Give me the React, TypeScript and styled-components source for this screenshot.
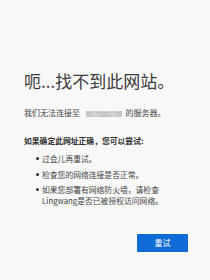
import styled, { createGlobalStyle } from "styled-components";

const GlobalStyle = createGlobalStyle`
  html, body {
    margin: 0;
    padding: 0;
    background: #f8f8f8;
  }
  body {
    font-family: "Noto Sans CJK SC", "Noto Sans", sans-serif;
  }
`;

const Page = styled.div`
  width: 210px;
  height: 280px;
  box-sizing: border-box;
  padding: 70px 22px 0 24px;
  background: #f8f8f8;
  color: #444;
`;

const Title = styled.h1`
  margin: 0;
  font-size: 17px;
  line-height: 22px;
  font-weight: 400;
  color: #3c3c3c;
`;

const Text = styled.p<{ $bold?: boolean; $gap: number }>`
  margin: ${(p) => p.$gap}px 0 0;
  font-size: ${(p) => (p.$bold ? "7.8px" : "8px")};
  line-height: 12px;
  font-weight: ${(p) => (p.$bold ? 700 : 400)};
  color: ${(p) => (p.$bold ? "#333" : "#444")};
  white-space: nowrap;
`;

const Hidden = styled.span`
  display: inline-block;
  width: 36px;
  height: 6px;
  margin: 0 3.5px 0 6px;
  vertical-align: -0.5px;
  background-color: #ddd;
  background-image: repeating-linear-gradient(
      45deg,
      #b8b8b8 0 1px,
      transparent 1px 2px
    ),
    repeating-linear-gradient(-45deg, #c8c8c8 0 1px, transparent 1px 2px);
  opacity: 0.85;
`;

const List = styled.ul`
  margin: 6px 0 0;
  padding: 0 0 0 18px;
  list-style: none;
`;

const Item = styled.li`
  position: relative;
  font-size: 7.8px;
  line-height: 11px;
  color: #444;
  white-space: nowrap;
  & + & {
    margin-top: 4.5px;
  }
  &::before {
    content: "";
    position: absolute;
    left: -6px;
    top: 4px;
    width: 3px;
    height: 3px;
    border-radius: 50%;
    background: #333;
  }
`;

const Actions = styled.div`
  display: flex;
  justify-content: flex-end;
  margin-top: 28px;
`;

const RetryButton = styled.button`
  width: 51px;
  height: 18px;
  border: none;
  border-radius: 1px;
  background: #0f6cd6;
  color: #fff;
  font-family: inherit;
  font-size: 8px;
  line-height: 18px;
  padding: 0;
`;

export default function App() {
  return (
    <>
      <GlobalStyle />
      <Page>
        <Title>呃...找不到此网站。</Title>
        <Text $gap={15}>
          我们无法连接至
          <Hidden />
          的服务器。
        </Text>
        <Text $gap={16} $bold>
          如果确定此网址正确，您可以尝试:
        </Text>
        <List>
          <Item>过会儿再重试。</Item>
          <Item>检查您的网络连接是否正常。</Item>
          <Item>
            如果您部署有网络防火墙，请检查
            <br />
            Lingwang是否已被授权访问网络。
          </Item>
        </List>
        <Actions>
          <RetryButton>重试</RetryButton>
        </Actions>
      </Page>
    </>
  );
}
